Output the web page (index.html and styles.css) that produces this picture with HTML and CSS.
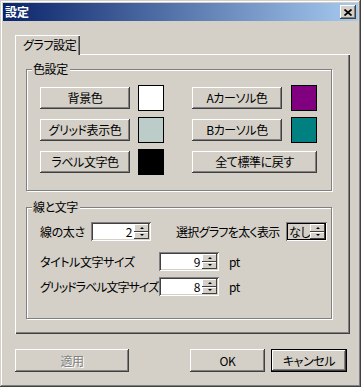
FILE: index.html
```html
<!DOCTYPE html>
<html lang="ja">
<head>
<meta charset="utf-8">
<title>設定</title>
<link rel="stylesheet" href="styles.css">
</head>
<body>
<div class="window">
  <div class="titlebar">
    <span class="title">設定</span>
    <div class="close">
      <svg width="8" height="7" viewBox="0 0 8 7"><path d="M0.5 0.5 L7.5 6.5 M7.5 0.5 L0.5 6.5" stroke="#000" stroke-width="1.7" fill="none"/></svg>
    </div>
  </div>
  <div class="body">
    <div class="tabs"><div class="tab">グラフ設定</div></div>
    <div class="panel">
      <div class="group g1">
        <div class="legend">色設定</div>
        <div class="rows">
          <div class="row">
            <div class="pair"><div class="btn">背景色</div><div class="swatch sw-white"></div></div>
            <div class="pair pr"><div class="btn">Aカーソル色</div><div class="swatch sw-purple"></div></div>
          </div>
          <div class="row">
            <div class="pair"><div class="btn">グリッド表示色</div><div class="swatch sw-grid"></div></div>
            <div class="pair pr"><div class="btn">Bカーソル色</div><div class="swatch sw-teal"></div></div>
          </div>
          <div class="row">
            <div class="pair"><div class="btn">ラベル文字色</div><div class="swatch sw-black"></div></div>
            <div class="pair pr"><div class="btn wide">全て標準に戻す</div></div>
          </div>
        </div>
      </div>
      <div class="group g2">
        <div class="legend">線と文字</div>
        <div class="frows">
          <div class="frow r1">
            <span class="lbl l1">線の太さ</span>
            <div class="spin"><span class="val">2</span><div class="arrows"><div class="arr"><i class="up"></i></div><div class="arr"><i class="dn"></i></div></div></div>
            <span class="lbl l2">選択グラフを太く表示</span>
            <div class="spin gray"><span class="val left">なし</span><div class="arrows"><div class="arr"><i class="up"></i></div><div class="arr"><i class="dn"></i></div></div></div>
          </div>
          <div class="frow r2">
            <span class="lbl l3">タイトル文字サイズ</span>
            <div class="spin"><span class="val">9</span><div class="arrows"><div class="arr"><i class="up"></i></div><div class="arr"><i class="dn"></i></div></div></div>
            <span class="unit">pt</span>
          </div>
          <div class="frow r3">
            <span class="lbl l3 tight">グリッドラベル文字サイズ</span>
            <div class="spin"><span class="val">8</span><div class="arrows"><div class="arr"><i class="up"></i></div><div class="arr"><i class="dn"></i></div></div></div>
            <span class="unit">pt</span>
          </div>
        </div>
      </div>
    </div>
    <div class="footer">
      <div class="btn fbtn apply disabled">適用</div>
      <div class="btn fbtn ok">OK</div>
      <div class="btn fbtn cancel default">キャンセル</div>
    </div>
  </div>
</div>
</body>
</html>
```

FILE: styles.css
```css
html, body {
  margin: 0;
  padding: 0;
  background: #d4d0c8;
}
body {
  font-family: "Noto Sans CJK JP", "Noto Sans", sans-serif;
  font-size: 12px;
  color: #000;
  font-feature-settings: "palt";
  letter-spacing: -0.4px;
}
.window {
  width: 361px;
  height: 387px;
  box-sizing: border-box;
  padding: 3px;
  background: #d4d0c8;
  box-shadow: inset -1px -1px 0 #404040, inset 1px 1px 0 #d4d0c8,
              inset -2px -2px 0 #808080, inset 2px 2px 0 #ffffff;
}
.titlebar {
  height: 18px;
  display: flex;
  align-items: center;
  justify-content: space-between;
  padding: 0 2px 0 2px;
  background: linear-gradient(to right, #0a246a, #a6caf0);
}
.title {
  color: #fff;
  font-weight: bold;
  font-size: 12px;
  line-height: 18px;
  letter-spacing: 0;
}
.close {
  width: 16px;
  height: 14px;
  box-sizing: border-box;
  background: #d4d0c8;
  display: flex;
  align-items: center;
  justify-content: center;
  box-shadow: inset -1px -1px 0 #404040, inset 1px 1px 0 #ffffff,
              inset -2px -2px 0 #808080;
}
.body {
  padding: 14px 8px 0 12px;
}
.tabs {
  display: flex;
  height: 19px;
}
.tab {
  position: relative;
  z-index: 1;
  width: 65px;
  height: 20px;
  box-sizing: border-box;
  background: #d4d0c8;
  border-top: 1px solid #fff;
  border-left: 1px solid #fff;
  box-shadow: inset -1px 0 0 #404040, inset -2px 0 0 #808080;
  line-height: 18px;
  padding-left: 7px;
  white-space: nowrap;
}
.panel {
  width: 335px;
  box-sizing: border-box;
  padding: 15px 0 15px 11px;
  box-shadow: inset 1px 1px 0 #ffffff, inset -1px -1px 0 #404040,
              inset -2px -2px 0 #808080;
}
.group {
  width: 306px;
  box-sizing: border-box;
  display: flex;
  flex-direction: column;
  border: 1px solid #808080;
  box-shadow: 1px 1px 0 #ffffff, inset 1px 1px 0 #ffffff;
}
.g1 { padding-bottom: 15px; }
.g2 { margin-top: 16px; padding-bottom: 22px; }
.legend {
  align-self: flex-start;
  margin: -8px 0 0 5px;
  padding: 0 2px 0 1px;
  background: #d4d0c8;
  line-height: 14px;
  height: 14px;
  white-space: nowrap;
}
.rows {
  margin: 9px 0 0 13px;
  display: flex;
  flex-direction: column;
  gap: 6px;
}
.row {
  display: flex;
  align-items: center;
  height: 26px;
  gap: 28px;
}
.pair {
  display: flex;
  align-items: center;
  gap: 8px;
}
.pair.pr { gap: 9px; }
.btn {
  width: 90px;
  height: 22px;
  flex-shrink: 0;
  box-sizing: border-box;
  background: #d4d0c8;
  display: flex;
  align-items: center;
  justify-content: center;
  line-height: 14px;
  white-space: nowrap;
  box-shadow: inset -1px -1px 0 #404040, inset 1px 1px 0 #ffffff,
              inset -2px -2px 0 #808080;
}
.btn.wide { width: 125px; }
.swatch {
  width: 26px;
  height: 26px;
  flex-shrink: 0;
  box-sizing: border-box;
  border: 1px solid #000;
}
.sw-white { background: #ffffff; }
.sw-grid { background: #bcccc8; }
.sw-black { background: #000000; }
.sw-purple { background: #800080; }
.sw-teal { background: #008080; }

.frows {
  margin: 8px 0 0 13px;
  display: flex;
  flex-direction: column;
}
.frow {
  display: flex;
  align-items: center;
  height: 19px;
}
.r2 { margin-top: 11px; }
.r3 { margin-top: 6px; }
.lbl { white-space: nowrap; line-height: 14px; flex-shrink: 0; }
.l1 { width: 51px; }
.l2 { margin-left: 25px; width: 110px; letter-spacing: -0.7px; }
.l3 { width: 119px; }
.l3.tight { letter-spacing: -1px; }
.unit { margin-left: 10px; line-height: 14px; }
.spin {
  width: 60px;
  height: 19px;
  flex-shrink: 0;
  box-sizing: border-box;
  padding: 2px;
  display: flex;
  background: #fff;
  box-shadow: inset 1px 1px 0 #808080, inset -1px -1px 0 #ffffff,
              inset 2px 2px 0 #404040, inset -2px -2px 0 #d4d0c8;
}
.spin.gray {
  width: 41px;
  background: #d4d0c8;
  box-shadow: inset 1px 1px 0 #808080, inset -1px -1px 0 #ffffff,
              inset 0 0 0 2px #000000;
}
.val {
  flex: 1;
  min-width: 0;
  text-align: right;
  padding-right: 2px;
  line-height: 15px;
  white-space: nowrap;
}
.val.left { text-align: left; padding-left: 1px; padding-right: 0; }
.arrows {
  width: 15px;
  flex-shrink: 0;
  display: flex;
  flex-direction: column;
}
.arr {
  flex: 1;
  background: #d4d0c8;
  display: flex;
  align-items: center;
  justify-content: center;
  box-shadow: inset -1px -1px 0 #404040, inset 1px 1px 0 #ffffff;
}
.arr i {
  display: block;
  width: 0;
  height: 0;
  border-left: 2px solid transparent;
  border-right: 2px solid transparent;
}
.arr i.up { border-bottom: 2px solid #000; }
.arr i.dn { border-top: 2px solid #000; }

.footer {
  margin-top: 15px;
  padding-right: 3px;
  display: flex;
  align-items: center;
  gap: 6px;
}
.fbtn { height: 23px; width: 75px; }
.apply { width: 114px; margin-right: auto; }
.cancel { width: 76px; }
.disabled {
  color: #808080;
  text-shadow: 1px 1px 0 #ffffff;
}
.default {
  box-shadow: inset 0 0 0 1px #000000, inset -2px -2px 0 #404040,
              inset 2px 2px 0 #ffffff, inset -3px -3px 0 #808080;
}
```
